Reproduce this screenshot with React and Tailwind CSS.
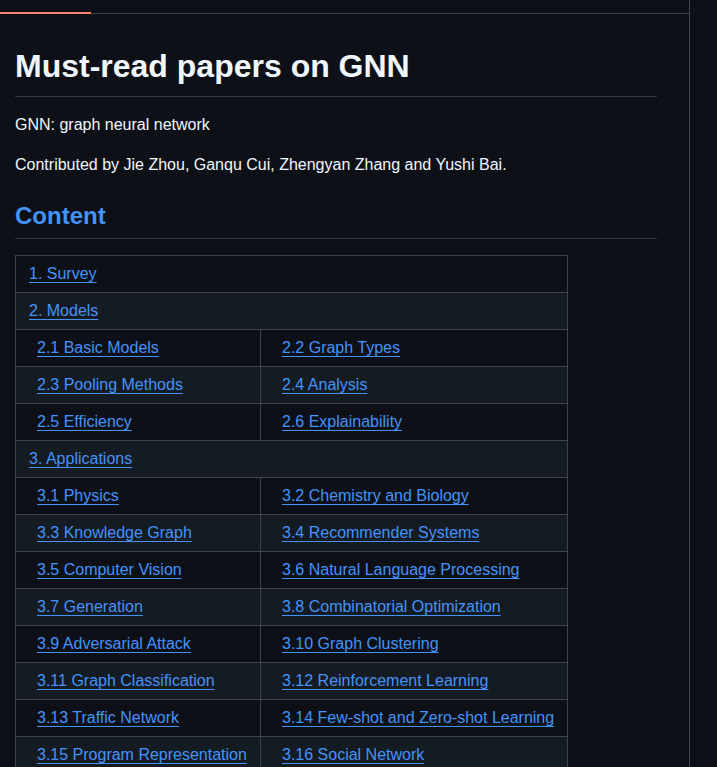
const rows = [
  { title: '1. Survey' },
  { title: '2. Models' },
  { cells: ['2.1 Basic Models', '2.2 Graph Types'] },
  { cells: ['2.3 Pooling Methods', '2.4 Analysis'] },
  { cells: ['2.5 Efficiency', '2.6 Explainability'] },
  { title: '3. Applications' },
  { cells: ['3.1 Physics', '3.2 Chemistry and Biology'] },
  { cells: ['3.3 Knowledge Graph', '3.4 Recommender Systems'] },
  { cells: ['3.5 Computer Vision', '3.6 Natural Language Processing'] },
  { cells: ['3.7 Generation', '3.8 Combinatorial Optimization'] },
  { cells: ['3.9 Adversarial Attack', '3.10 Graph Clustering'] },
  { cells: ['3.11 Graph Classification', '3.12 Reinforcement Learning'] },
  { cells: ['3.13 Traffic Network', '3.14 Few-shot and Zero-shot Learning'] },
  { cells: ['3.15 Program Representation', '3.16 Social Network'] },
];

function TocLink({ children }) {
  return <a href="#" className="text-[#4493f8] underline underline-offset-[3.2px]">{children}</a>;
}

export default function App() {
  return (
    <div className="h-screen overflow-hidden bg-[#0d1117] text-[#f0f6fc] font-['Liberation_Sans',Arial,sans-serif] text-base leading-6">
      <div className="w-[690px] h-screen border-r border-[#3d444d]">
        {/* Tab strip */}
        <div className="h-[14px] flex items-end border-b border-[#3d444d]">
          <div className="w-[91px] h-[2px] -mb-px bg-[#f78166]"></div>
        </div>

        <div className="pl-[15px] pr-[32px]">
          <h1 className="mt-[32px] pb-[10px] text-[32px] leading-[40px] font-bold border-b border-[#3d444db3]">
            Must-read papers on GNN
          </h1>
          <p className="mt-4">GNN: graph neural network</p>
          <p className="mt-4">Contributed by Jie Zhou, Ganqu Cui, Zhengyan Zhang and Yushi Bai.</p>
          <h2 className="mt-6 pb-[7px] text-2xl leading-[30px] font-bold text-[#4493f8] border-b border-[#3d444db3]">
            Content
          </h2>

          <table className="mt-4 w-[552px] table-fixed border-collapse">
            <colgroup>
              <col className="w-[245px]" />
              <col className="w-[307px]" />
            </colgroup>
            <tbody>
              {rows.map((row, index) => (
                <tr key={index} className={index % 2 === 1 ? 'bg-[#151b23]' : 'bg-[#0d1117]'}>
                  {row.title ? (
                    <td colSpan={2} className="border border-[#3d444d] px-[13px] py-[6px]">
                      <TocLink>{row.title}</TocLink>
                    </td>
                  ) : (
                    row.cells.map((cell) => (
                      <td key={cell} className="border border-[#3d444d] pl-[21px] pr-[13px] py-[6px] whitespace-nowrap">
                        <TocLink>{cell}</TocLink>
                      </td>
                    ))
                  )}
                </tr>
              ))}
            </tbody>
          </table>
        </div>
      </div>
    </div>
  );
}
